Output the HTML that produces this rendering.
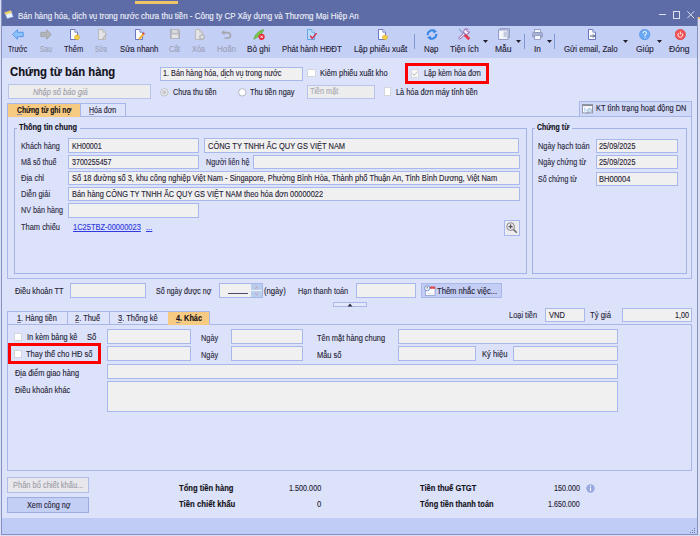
<!DOCTYPE html><html><head><meta charset="utf-8"><style>
*{box-sizing:border-box;margin:0;padding:0}
html,body{width:700px;height:536px;overflow:hidden}
body{position:relative;background:#dcdff2;font-family:"Liberation Sans",sans-serif;font-size:8px;color:#262234}
.a{position:absolute}
u{text-decoration-color:#8a8a9a}
.t{position:absolute;white-space:nowrap;line-height:1.117;transform-origin:0 0;-webkit-text-stroke:0.12px currentColor}
</style></head><body>
<div class="a" style="left:1px;top:0px;width:697.00px;height:535.00px;background:#dbe2fa;border-left:1px solid #8391c4;border-right:1px solid #8391c4;border-bottom:1px solid #8391c4;"></div>
<div class="a" style="left:2px;top:0px;width:695.00px;height:26.00px;background:#5d6ca6;"></div>
<div class="a" style="left:135px;top:1px;width:43.00px;height:3.00px;background:#f0c46a;"></div>
<div class="a" style="left:697px;top:0px;width:3.00px;height:16.50px;background:#5d6ca6;"></div>
<div class="a" style="left:698.3px;top:16.5px;width:1.70px;height:2.00px;background:#f0c060;"></div>
<svg class="a" style="left:4px;top:10px" width="10" height="9" viewBox="0 0 10 9"><path d="M0.5 2.5L7 0.5L9.5 7L3 8.8Z" fill="#e8f4ff" stroke="#6a7ae0" stroke-width="0.7"/><path d="M0.5 2.5L7 0.5L7.8 2.8L1.3 4.8Z" fill="#f0d060"/></svg>
<span class="t" style="top:11.11px;font-size:9px;color:#eef0fa;left:17.60px;transform:scaleX(0.8854);">Bán hàng hóa, dịch vụ trong nước chưa thu tiền - Công ty CP Xây dựng và Thương Mại Hiệp An</span>
<div class="a" style="left:659.3px;top:14px;width:7.00px;height:1.00px;background:#dde1ee;"></div>
<div class="a" style="left:672.6px;top:11.4px;width:7.20px;height:7.20px;border:1px solid #dde1ee;"></div>
<svg class="a" style="left:687.2px;top:11.4px" width="7.5" height="7.5" viewBox="0 0 7.5 7.5"><path d="M0.3 0.3L7.2 7.2M7.2 0.3L0.3 7.2" stroke="#dde1ee" stroke-width="1"/></svg>
<div class="a" style="left:2px;top:26px;width:695.00px;height:31.50px;background:#c4cff5;"></div>
<span class="t" style="top:43.74px;font-size:9.4px;color:#262234;left:7.90px;transform:scaleX(0.7522);">Trước</span>
<span class="t" style="top:43.74px;font-size:9.4px;color:#9ca2b6;left:39.70px;transform:scaleX(0.7287);">Sau</span>
<span class="t" style="top:43.74px;font-size:9.4px;color:#262234;left:64.30px;transform:scaleX(0.7990);">Thêm</span>
<span class="t" style="top:43.74px;font-size:9.4px;color:#9ca2b6;left:94.70px;transform:scaleX(0.6692);">Sửa</span>
<span class="t" style="top:43.74px;font-size:9.4px;color:#262234;left:119.70px;transform:scaleX(0.8268);">Sửa nhanh</span>
<span class="t" style="top:43.74px;font-size:9.4px;color:#9ca2b6;left:169.00px;transform:scaleX(0.7608);">Cất</span>
<span class="t" style="top:43.74px;font-size:9.4px;color:#9ca2b6;left:191.70px;transform:scaleX(0.7843);">Xóa</span>
<span class="t" style="top:43.74px;font-size:9.4px;color:#9ca2b6;left:216.90px;transform:scaleX(0.8469);">Hoãn</span>
<span class="t" style="top:43.74px;font-size:9.4px;color:#262234;left:247.00px;transform:scaleX(0.8679);">Bỏ ghi</span>
<span class="t" style="top:43.74px;font-size:9.4px;color:#262234;left:281.80px;transform:scaleX(0.8373);">Phát hành HĐĐT</span>
<span class="t" style="top:43.74px;font-size:9.4px;color:#262234;left:354.20px;transform:scaleX(0.8658);">Lập phiếu xuất</span>
<span class="t" style="top:43.74px;font-size:9.4px;color:#262234;left:424.00px;transform:scaleX(0.8420);">Nạp</span>
<span class="t" style="top:43.74px;font-size:9.4px;color:#262234;left:449.60px;transform:scaleX(0.8693);">Tiện ích</span>
<span class="t" style="top:43.74px;font-size:9.4px;color:#262234;left:494.60px;transform:scaleX(0.9099);">Mẫu</span>
<span class="t" style="top:43.74px;font-size:9.4px;color:#262234;left:533.60px;transform:scaleX(0.8810);">In</span>
<span class="t" style="top:43.74px;font-size:9.4px;color:#262234;left:564.00px;transform:scaleX(0.8374);">Gửi email, Zalo</span>
<span class="t" style="top:43.74px;font-size:9.4px;color:#262234;left:635.70px;transform:scaleX(0.8985);">Giúp</span>
<span class="t" style="top:43.74px;font-size:9.4px;color:#262234;left:668.90px;transform:scaleX(0.9190);">Đóng</span>
<div class="a" style="left:414.3px;top:33.5px;width:1.00px;height:15.00px;background:#7c9ad8;"></div>
<div class="a" style="left:523.5px;top:33.5px;width:1.00px;height:15.00px;background:#7c9ad8;"></div>
<div class="a" style="left:553.8px;top:33.5px;width:1.00px;height:15.00px;background:#7c9ad8;"></div>
<svg class="a" style="left:482.5px;top:40px" width="5" height="3" viewBox="0 0 5 3"><path d="M0 0H5L2.5 3Z" fill="#202030"/></svg>
<svg class="a" style="left:515.7px;top:40px" width="5" height="3" viewBox="0 0 5 3"><path d="M0 0H5L2.5 3Z" fill="#202030"/></svg>
<svg class="a" style="left:546.8px;top:40px" width="5" height="3" viewBox="0 0 5 3"><path d="M0 0H5L2.5 3Z" fill="#202030"/></svg>
<svg class="a" style="left:622.5px;top:40px" width="5" height="3" viewBox="0 0 5 3"><path d="M0 0H5L2.5 3Z" fill="#202030"/></svg>
<svg class="a" style="left:657.2px;top:40px" width="5" height="3" viewBox="0 0 5 3"><path d="M0 0H5L2.5 3Z" fill="#202030"/></svg>
<svg class="a" style="left:12px;top:28.5px" width="12" height="11" viewBox="0 0 12 11"><path d="M0.6 5.5L5.4 0.7V3.3H11.2V7.7H5.4V10.3Z" fill="#8ec2fa" stroke="#4f92ea" stroke-width="0.9" stroke-linejoin="round"/></svg><svg class="a" style="left:39.5px;top:28.5px" width="12" height="11" viewBox="0 0 12 11"><path d="M11.4 5.5L6.6 0.7V3.3H0.8V7.7H6.6V10.3Z" fill="#b2b4b8" stroke="#a2a4aa" stroke-width="0.9" stroke-linejoin="round"/></svg><svg class="a" style="left:69px;top:28.5px" width="11" height="11" viewBox="0 0 11 11"><path d="M1.5 0.5H5.8L8.5 3.2V10.5H1.5Z" fill="#fff" stroke="#5a6ab8" stroke-width="0.9"/><path d="M5.8 0.5V3.2H8.5" fill="#dfe4f4" stroke="#5a6ab8" stroke-width="0.7"/><circle cx="8" cy="8.3" r="2.4" fill="#f6d040" stroke="#d8a828" stroke-width="0.6"/></svg><svg class="a" style="left:97px;top:28.5px" width="11" height="11" viewBox="0 0 11 11"><path d="M1.5 0.5H5.8L8.5 3.2V10.5H1.5Z" fill="#e4e4e6" stroke="#b4b4b8" stroke-width="0.9"/><path d="M5.8 0.5V3.2H8.5" fill="#d0d0d4" stroke="#b4b4b8" stroke-width="0.7"/><path d="M5.5 10L9.8 5" stroke="#bdbdc0" stroke-width="1.8"/></svg><svg class="a" style="left:133.5px;top:28.5px" width="11" height="11" viewBox="0 0 11 11"><path d="M1.5 0.5H5.8L8.5 3.2V10.5H1.5Z" fill="#fff" stroke="#5a6ab8" stroke-width="0.9"/><path d="M5.8 0.5V3.2H8.5" fill="#dfe4f4" stroke="#5a6ab8" stroke-width="0.7"/><path d="M5 10.3L9.6 4.8" stroke="#f0b030" stroke-width="2"/><path d="M9 5.2L10.2 3.8" stroke="#e04040" stroke-width="2"/></svg><svg class="a" style="left:170px;top:29px" width="10" height="10" viewBox="0 0 10 10"><path d="M0.5 0.5H8.5L9.5 1.5V9.5H0.5Z" fill="#bdbdc2" stroke="#a6a6ac" stroke-width="0.8"/><rect x="2.3" y="0.8" width="5" height="3" fill="#dcdce0"/><rect x="1.8" y="5.6" width="6.4" height="3.6" fill="#e4e4e8"/></svg><svg class="a" style="left:193.5px;top:28.5px" width="11" height="11" viewBox="0 0 11 11"><path d="M1.5 0.5H5.8L8.5 3.2V10.5H1.5Z" fill="#e4e4e6" stroke="#b4b4b8" stroke-width="0.9"/><path d="M5.8 0.5V3.2H8.5" fill="#d0d0d4" stroke="#b4b4b8" stroke-width="0.7"/><circle cx="8" cy="8" r="2.6" fill="#c8c8cc" stroke="#a8a8ae" stroke-width="0.6"/><path d="M7 7L9 9M9 7L7 9" stroke="#f0f0f0" stroke-width="0.7"/></svg><svg class="a" style="left:221px;top:30px" width="11" height="9" viewBox="0 0 11 9"><path d="M2.8 2.6H6.8A2.7 2.7 0 0 1 6.8 8H3.5" fill="none" stroke="#a4a6ae" stroke-width="1.7"/><path d="M0.2 2.6L3.4 0V5.2Z" fill="#a4a6ae"/></svg><svg class="a" style="left:253px;top:28.5px" width="12" height="11" viewBox="0 0 12 11"><path d="M0.8 10.2C2 6 5 2 10.6 0.6C10 4 6 8 0.8 10.2Z" fill="#74c84a" stroke="#4e9a30" stroke-width="0.6"/><circle cx="8.6" cy="7.8" r="3.1" fill="#ea2a3a"/><path d="M7.4 6.6L9.8 9M9.8 6.6L7.4 9" stroke="#fff" stroke-width="0.9"/></svg><svg class="a" style="left:306px;top:28.5px" width="11" height="11" viewBox="0 0 11 11"><path d="M1.5 0.5H5.8L8.5 3.2V10.5H1.5Z" fill="#b8dcfa" stroke="#5a9ae0" stroke-width="0.9"/><path d="M5.8 0.5V3.2H8.5" fill="#e0f0ff" stroke="#5a9ae0" stroke-width="0.7"/><path d="M4.2 6.8L6.2 9.4L10.6 4.2" fill="none" stroke="#e02a48" stroke-width="1.4"/></svg><svg class="a" style="left:376.5px;top:28.5px" width="11" height="11" viewBox="0 0 11 11"><path d="M1.5 0.5H5.8L8.5 3.2V10.5H1.5Z" fill="#fff" stroke="#5a6ab8" stroke-width="0.9"/><path d="M5.8 0.5V3.2H8.5" fill="#dfe4f4" stroke="#5a6ab8" stroke-width="0.7"/><circle cx="8" cy="8.3" r="2.4" fill="#f6d040" stroke="#d8a828" stroke-width="0.6"/></svg><svg class="a" style="left:425.5px;top:29px" width="12" height="11" viewBox="0 0 12 11"><path d="M1.8 6.2A4.2 4.2 0 0 1 8.2 2" fill="none" stroke="#3a86e4" stroke-width="2.1"/><path d="M10.2 4.8A4.2 4.2 0 0 1 3.8 9" fill="none" stroke="#3a86e4" stroke-width="2.1"/><path d="M7 0L11 2.2L7.6 4.4Z" fill="#3a86e4"/><path d="M5 11L1 8.8L4.4 6.6Z" fill="#3a86e4"/></svg><svg class="a" style="left:457.5px;top:28px" width="12" height="12" viewBox="0 0 12 12"><path d="M1 1L6 6" stroke="#8aa0cc" stroke-width="1.3"/><path d="M6.8 6.8L10.3 10.3" stroke="#e43c4c" stroke-width="3" stroke-linecap="round"/><path d="M1.8 10.2L7 5" stroke="#9060b0" stroke-width="2.6" stroke-linecap="round"/><path d="M1.8 10.2L7 5" stroke="#f8f4fc" stroke-width="1.1" stroke-linecap="round"/><circle cx="8.4" cy="3.6" r="2.7" fill="#f8f4fc" stroke="#9060b0" stroke-width="1"/><path d="M8.6 3.4L11.6 0.4L12 4Z" fill="#c4cff5"/><path d="M7.6 0.2L8.8 3.2L12 4.2" fill="none" stroke="#9060b0" stroke-width="0.7"/></svg><svg class="a" style="left:497.5px;top:28px" width="12" height="12" viewBox="0 0 12 12"><rect x="2" y="0.6" width="9.4" height="8.8" fill="#c8d0ec" stroke="#8a94c0" stroke-width="0.8"/><rect x="0.6" y="2" width="9.4" height="9.4" fill="#f4f6fc" stroke="#8a94c0" stroke-width="0.9"/><rect x="5.6" y="3.6" width="3.2" height="5.6" fill="#c4c8dc"/></svg><svg class="a" style="left:532px;top:28.5px" width="11" height="11" viewBox="0 0 11 11"><rect x="2.5" y="0.5" width="6" height="3" fill="#f4f6fc" stroke="#8a94c0" stroke-width="0.8"/><rect x="0.5" y="3.5" width="10" height="4.8" rx="1.2" fill="#aab2d0" stroke="#8a94c0" stroke-width="0.8"/><rect x="2.5" y="6.5" width="6" height="4" fill="#f4f6fc" stroke="#8a94c0" stroke-width="0.8"/></svg><svg class="a" style="left:586.5px;top:29px" width="11" height="11" viewBox="0 0 11 11"><path d="M1.5 0.5H5.8L8.5 3.2V10.5H1.5Z" fill="#fff" stroke="#5a6ab8" stroke-width="0.9"/><path d="M5.8 0.5V3.2H8.5" fill="#dfe4f4" stroke="#5a6ab8" stroke-width="0.7"/><path d="M3 7H7.6M6 5.4L7.6 7L6 8.6" fill="none" stroke="#3a4460" stroke-width="0.9"/></svg><svg class="a" style="left:638.5px;top:29px" width="12" height="11" viewBox="0 0 12 11"><circle cx="5.7" cy="5.5" r="5.2" fill="#6aaaf4" stroke="#4a8ae0" stroke-width="0.6"/><path d="M4 4.2A1.7 1.7 0 1 1 6 5.8V7" fill="none" stroke="#fff" stroke-width="1"/><circle cx="6" cy="8.6" r="0.6" fill="#fff"/></svg><svg class="a" style="left:674.5px;top:29px" width="11" height="11" viewBox="0 0 11 11"><circle cx="5.3" cy="5.5" r="5.2" fill="#f05454" stroke="#d83a3e" stroke-width="0.6"/><path d="M3.6 4.2A2.4 2.4 0 1 0 7 4.2" fill="none" stroke="#fff" stroke-width="0.9"/><path d="M5.3 2.6V5.6" stroke="#fff" stroke-width="0.9"/></svg>
<span class="t" style="top:66.29px;font-size:12px;color:#121018;font-weight:bold;-webkit-text-stroke:0.15px currentColor;left:9.80px;transform:scaleX(0.9391);">Chứng từ bán hàng</span>
<div class="a" style="left:160px;top:67px;width:142.50px;height:13.60px;background:#f0f0f0;border:1px solid #a8b8ea;"></div>
<span class="t" style="top:68.96px;font-size:8.5px;color:#262234;left:162.90px;transform:scaleX(0.8560);">1. Bán hàng hóa, dịch vụ trong nước</span>
<div class="a" style="left:307.4px;top:69.4px;width:8.30px;height:8.00px;background:#fff;border:1px solid #d4d6dc;"></div>
<span class="t" style="top:68.96px;font-size:8.5px;color:#262234;left:320.00px;transform:scaleX(0.8785);">Kiêm phiếu xuất kho</span>
<div class="a" style="left:405px;top:63px;width:84.00px;height:21.00px;border:3px solid #fe0000;"></div>
<div class="a" style="left:411px;top:69px;width:8.00px;height:8.50px;background:#f8f8f8;border:1px solid #d8d8dc;"></div>
<svg class="a" style="left:411px;top:69px" width="8" height="8.5" viewBox="0 0 8 8.5"><path d="M1.4 4.4L3.2 6.2L6.8 2.4" fill="none" stroke="#b8b8bc" stroke-width="1"/></svg>
<span class="t" style="top:68.96px;font-size:8.5px;color:#262234;left:423.60px;transform:scaleX(0.8547);">Lập kèm hóa đơn</span>
<div class="a" style="left:7.5px;top:84.3px;width:143.20px;height:14.80px;background:#ededed;border:1px solid #b8c4ec;"></div>
<span class="t" style="top:87.66px;font-size:8.5px;color:#9c9ca8;font-style:italic;left:33.00px;transform:scaleX(0.8845);">Nhập số báo giá</span>
<svg class="a" style="left:160px;top:88px" width="9" height="9" viewBox="0 0 9 9"><circle cx="4.3" cy="4.3" r="3.7" fill="#f2f2f2" stroke="#b0b2bc" stroke-width="0.8"/><circle cx="4.3" cy="4.3" r="2.1" fill="#c4c6cc"/></svg>
<span class="t" style="top:87.76px;font-size:8.5px;color:#262234;left:172.60px;transform:scaleX(0.8456);">Chưa thu tiền</span>
<svg class="a" style="left:238px;top:88px" width="9" height="9" viewBox="0 0 9 9"><circle cx="4.3" cy="4.3" r="3.7" fill="#fff" stroke="#a6aab6" stroke-width="0.8"/></svg>
<span class="t" style="top:87.76px;font-size:8.5px;color:#262234;left:250.00px;transform:scaleX(0.8631);">Thu tiền ngay</span>
<div class="a" style="left:307.1px;top:85.1px;width:67.50px;height:14.00px;background:#ededed;border:1px solid #b8c4ec;"></div>
<span class="t" style="top:87.26px;font-size:8.5px;color:#a8a8b2;left:309.70px;transform:scaleX(0.8656);">Tiền mặt</span>
<div class="a" style="left:383.6px;top:87.4px;width:7.80px;height:8.20px;background:#fff;border:1px solid #d4d6dc;"></div>
<span class="t" style="top:87.76px;font-size:8.5px;color:#262234;left:396.00px;transform:scaleX(0.8650);">Là hóa đơn máy tính tiền</span>
<div class="a" style="left:7.1px;top:116.4px;width:684.90px;height:162.60px;border:1px solid #a9b7e8;"></div>
<div class="a" style="left:14px;top:128px;width:512.50px;height:145.50px;border:1px solid #a2b2e6;"></div>
<div class="a" style="left:17px;top:122px;width:63.00px;height:11.00px;background:#dbe2fa;"></div>
<span class="t" style="top:122.96px;font-size:8.5px;color:#121018;font-weight:bold;left:19.30px;transform:scaleX(0.8709);">Thông tin chung</span>
<div class="a" style="left:532px;top:128px;width:154.50px;height:145.50px;border:1px solid #a2b2e6;"></div>
<div class="a" style="left:535px;top:122px;width:37.00px;height:11.00px;background:#dbe2fa;"></div>
<span class="t" style="top:122.96px;font-size:8.5px;color:#121018;font-weight:bold;left:536.70px;transform:scaleX(0.8212);">Chứng từ</span>
<div class="a" style="left:7.1px;top:103px;width:72.90px;height:14.20px;background:#f6ca80;border:1px solid #a9b7e8;border-bottom:none;border-right:none;"></div>
<div class="a" style="left:79.6px;top:103px;width:46.40px;height:14.40px;background:#dde3fa;border:1px solid #a9b7e8;"></div>
<span class="t" style="top:105.56px;font-size:8.5px;color:#121018;font-weight:bold;left:17.10px;transform:scaleX(0.7985);"><u>C</u>hứng từ ghi nợ</span>
<span class="t" style="top:105.56px;font-size:8.5px;color:#262234;left:88.60px;transform:scaleX(0.8269);"><u>H</u>óa đơn</span>
<div class="a" style="left:579px;top:101px;width:113.00px;height:16.40px;background:#d0d8f7;border:1px solid #a9b7e8;"></div>
<svg class="a" style="left:582px;top:104px" width="11" height="10" viewBox="0 0 11 10"><rect x="0.5" y="0.5" width="10" height="8.4" fill="#fbfcff" stroke="#8a90a0" stroke-width="0.9"/><rect x="0.5" y="0.5" width="10" height="1.6" fill="#8a90a0"/><path d="M2.5 3.5V7.5M4 4.5V7.5" stroke="#b8d4f0" stroke-width="0.9"/><circle cx="7.6" cy="6.6" r="2" fill="#cfe6fa" stroke="#8aa0b8" stroke-width="0.7"/><path d="M6 8.2L4.8 9.6" stroke="#707890" stroke-width="0.9"/></svg>
<span class="t" style="top:104.46px;font-size:8.5px;color:#262234;left:596.00px;transform:scaleX(0.8708);">KT tình trạng hoạt động DN</span>
<span class="t" style="top:142.16px;font-size:8.5px;color:#2e2a40;left:20.80px;transform:scaleX(0.8566);">Khách hàng</span>
<span class="t" style="top:158.06px;font-size:8.5px;color:#2e2a40;left:20.80px;transform:scaleX(0.8458);">Mã số thuế</span>
<span class="t" style="top:174.26px;font-size:8.5px;color:#2e2a40;left:20.80px;transform:scaleX(0.8853);">Địa chỉ</span>
<span class="t" style="top:190.06px;font-size:8.5px;color:#2e2a40;left:20.80px;transform:scaleX(0.8799);">Diễn giải</span>
<span class="t" style="top:205.96px;font-size:8.5px;color:#2e2a40;left:20.80px;transform:scaleX(0.8478);">NV bán hàng</span>
<span class="t" style="top:222.66px;font-size:8.5px;color:#2e2a40;left:20.80px;transform:scaleX(0.8773);">Tham chiếu</span>
<div class="a" style="left:68px;top:138px;width:131.00px;height:14.60px;background:#f0f0f0;border:1px solid #a8b8ea;"></div>
<span class="t" style="top:141.56px;font-size:8.5px;color:#262234;left:72.40px;transform:scaleX(0.8399);">KH00001</span>
<div class="a" style="left:204.3px;top:138px;width:315.20px;height:14.60px;background:#f0f0f0;border:1px solid #a8b8ea;"></div>
<span class="t" style="top:141.56px;font-size:8.5px;color:#262234;left:207.90px;transform:scaleX(0.8787);">CÔNG TY TNHH ẮC QUY GS VIỆT NAM</span>
<div class="a" style="left:68px;top:154.6px;width:131.00px;height:14.00px;background:#f0f0f0;border:1px solid #a8b8ea;"></div>
<span class="t" style="top:157.86px;font-size:8.5px;color:#262234;left:72.40px;transform:scaleX(0.8350);">3700255457</span>
<span class="t" style="top:158.06px;font-size:8.5px;color:#2e2a40;left:205.70px;transform:scaleX(0.8433);">Người liên hệ</span>
<div class="a" style="left:253px;top:154.6px;width:266.50px;height:14.00px;background:#f0f0f0;border:1px solid #a8b8ea;"></div>
<div class="a" style="left:68px;top:171.1px;width:451.50px;height:13.70px;background:#f0f0f0;border:1px solid #a8b8ea;"></div>
<span class="t" style="top:174.16px;font-size:8.5px;color:#262234;left:72.40px;transform:scaleX(0.8745);">Số 18 đường số 3, khu công nghiệp Việt Nam - Singapore, Phường Bình Hòa, Thành phố Thuận An, Tỉnh Bình Dương, Việt Nam</span>
<div class="a" style="left:68px;top:186.8px;width:451.50px;height:14.40px;background:#f0f0f0;border:1px solid #a8b8ea;"></div>
<span class="t" style="top:189.96px;font-size:8.5px;color:#262234;left:72.40px;transform:scaleX(0.8725);">Bán hàng CÔNG TY TNHH ẮC QUY GS VIỆT NAM theo hóa đơn 00000022</span>
<div class="a" style="left:68px;top:203.3px;width:131.00px;height:14.70px;background:#f0f0f0;border:1px solid #a8b8ea;"></div>
<span class="t" style="top:223.06px;font-size:8.5px;color:#3038e0;left:73.30px;transform:scaleX(0.8810);"><u style="text-decoration-color:currentColor">1C25TBZ-00000023</u></span>
<span class="t" style="top:223.06px;font-size:8.5px;color:#3038e0;left:145.70px;transform:scaleX(0.8924);"><u style="text-decoration-color:currentColor">...</u></span>
<div class="a" style="left:504px;top:220px;width:16.00px;height:16.00px;background:#ececee;border:1px solid #a8b8ee;"></div>
<svg class="a" style="left:505px;top:221px" width="14" height="14" viewBox="0 0 14 14"><circle cx="5.6" cy="5.6" r="3.9" fill="#e4e4e6" stroke="#8a8a90" stroke-width="1"/><path d="M8.4 8.4L11.8 11.8" stroke="#6e6e74" stroke-width="1.5"/><path d="M3.6 5.6H7.6M5.6 3.6V7.6" stroke="#505058" stroke-width="1.2"/></svg>
<span class="t" style="top:142.36px;font-size:8.5px;color:#2e2a40;left:538.00px;transform:scaleX(0.8677);">Ngày hạch toán</span>
<div class="a" style="left:596.4px;top:139.4px;width:81.20px;height:13.60px;background:#f0f0f0;border:1px solid #a8b8ea;"></div>
<span class="t" style="top:142.06px;font-size:8.5px;color:#262234;left:599.00px;transform:scaleX(0.8572);">25/09/2025</span>
<span class="t" style="top:158.36px;font-size:8.5px;color:#2e2a40;left:538.00px;transform:scaleX(0.8466);">Ngày chứng từ</span>
<div class="a" style="left:596.4px;top:155.4px;width:81.20px;height:13.60px;background:#f0f0f0;border:1px solid #a8b8ea;"></div>
<span class="t" style="top:158.06px;font-size:8.5px;color:#262234;left:599.00px;transform:scaleX(0.8572);">25/09/2025</span>
<span class="t" style="top:175.06px;font-size:8.5px;color:#2e2a40;left:538.00px;transform:scaleX(0.8214);">Số chứng từ</span>
<div class="a" style="left:596.4px;top:172px;width:81.20px;height:13.70px;background:#f0f0f0;border:1px solid #a8b8ea;"></div>
<span class="t" style="top:174.66px;font-size:8.5px;color:#262234;left:599.00px;transform:scaleX(0.8847);">BH00004</span>
<span class="t" style="top:286.66px;font-size:8.5px;color:#262234;left:14.50px;transform:scaleX(0.8730);">Điều khoản TT</span>
<div class="a" style="left:70px;top:283px;width:76.00px;height:14.50px;background:#f0f0f0;border:1px solid #a8b8ea;"></div>
<span class="t" style="top:286.66px;font-size:8.5px;color:#262234;left:156.00px;transform:scaleX(0.8343);">Số ngày được nợ</span>
<div class="a" style="left:219px;top:283px;width:44.00px;height:15.00px;background:#f0f0f0;border:1px solid #a8b8ea;"></div>
<div class="a" style="left:250.7px;top:284px;width:11.30px;height:6.00px;background:#b9cdec;"></div>
<div class="a" style="left:250.7px;top:290.8px;width:11.30px;height:6.20px;background:#b9cdec;"></div>
<svg class="a" style="left:254px;top:286px" width="5" height="10" viewBox="0 0 5 10"><path d="M1.2 2.4L2.5 1.2L3.8 2.4" fill="none" stroke="#d07080" stroke-width="0.7"/><path d="M1.2 7.6L2.5 8.8L3.8 7.6" fill="none" stroke="#d07080" stroke-width="0.7"/></svg>
<div class="a" style="left:228px;top:293.2px;width:20.40px;height:1.20px;background:#504868;"></div>
<span class="t" style="top:286.66px;font-size:8.5px;color:#262234;left:263.80px;transform:scaleX(0.9026);">(ngày)</span>
<span class="t" style="top:286.66px;font-size:8.5px;color:#2e2a40;left:297.80px;transform:scaleX(0.8630);">Hạn thanh toán</span>
<div class="a" style="left:356px;top:283px;width:60.00px;height:15.00px;background:#f0f0f0;border:1px solid #a8b8ea;"></div>
<div class="a" style="left:421px;top:282.5px;width:80.50px;height:15.50px;background:#c4cef4;border:1px solid #a8b8ea;"></div>
<svg class="a" style="left:424px;top:285px" width="12" height="12" viewBox="0 0 12 12"><rect x="1.5" y="2" width="9.5" height="8.6" fill="#fdfdff" stroke="#8090c8" stroke-width="0.7"/><rect x="5.6" y="1.6" width="5.6" height="2.2" fill="#e84a4a"/><path d="M3.5 8.5H9.5" stroke="#d8dcec" stroke-width="0.8"/><circle cx="3.2" cy="3.2" r="2.6" fill="#f4f6fc" stroke="#6a8ad0" stroke-width="0.9"/><path d="M3.2 1.8V3.6" stroke="#404860" stroke-width="0.8"/></svg>
<span class="t" style="top:286.96px;font-size:8.5px;color:#262234;left:437.20px;transform:scaleX(0.8948);">Thêm nhắc việc...</span>
<div class="a" style="left:333px;top:301.7px;width:34.00px;height:5.30px;background:#e4e8f8;border:1px solid #a8b8ea;"></div>
<svg class="a" style="left:347px;top:302.5px" width="6" height="4" viewBox="0 0 6 4"><path d="M0.5 3.5H5.5L3 0.5Z" fill="#303040"/></svg>
<div class="a" style="left:7.1px;top:324px;width:684.90px;height:147.00px;border:1px solid #a9b7e8;"></div>
<div class="a" style="left:7.1px;top:311px;width:60.50px;height:14.00px;background:#dde3fa;border:1px solid #a9b7e8;"></div>
<span class="t" style="top:313.66px;font-size:8.5px;color:#262234;left:17.00px;transform:scaleX(0.8675);"><u>1</u>. Hàng tiền</span>
<div class="a" style="left:66.6px;top:311px;width:43.40px;height:14.00px;background:#dde3fa;border:1px solid #a9b7e8;"></div>
<span class="t" style="top:313.66px;font-size:8.5px;color:#262234;left:74.50px;transform:scaleX(0.8764);"><u>2</u>. Thuế</span>
<div class="a" style="left:109px;top:311px;width:59.50px;height:14.00px;background:#dde3fa;border:1px solid #a9b7e8;"></div>
<span class="t" style="top:313.66px;font-size:8.5px;color:#262234;left:118.00px;transform:scaleX(0.8857);"><u>3</u>. Thống kê</span>
<div class="a" style="left:167.5px;top:311px;width:42.50px;height:14.00px;background:#f6ca80;border:1px solid #a9b7e8;border-bottom:none;border-left:none;"></div>
<span class="t" style="top:313.66px;font-size:8.5px;color:#121018;font-weight:bold;left:175.80px;transform:scaleX(0.8588);"><u>4</u>. Khác</span>
<span class="t" style="top:311.16px;font-size:8.5px;color:#2e2a40;left:508.90px;transform:scaleX(0.8732);">Loại tiền</span>
<div class="a" style="left:545.3px;top:308.2px;width:40.10px;height:13.40px;background:#f0f0f0;border:1px solid #a8b8ea;"></div>
<span class="t" style="top:310.86px;font-size:8.5px;color:#262234;left:549.40px;transform:scaleX(0.8872);">VND</span>
<span class="t" style="top:311.16px;font-size:8.5px;color:#262234;left:590.20px;transform:scaleX(0.9095);">Tỷ giá</span>
<div class="a" style="left:622px;top:308.3px;width:69.50px;height:13.40px;background:#f0f0f0;border:1px solid #a8b8ea;"></div>
<span class="t" style="top:310.86px;font-size:8.5px;color:#262234;left:674.90px;transform:scaleX(0.8444);">1,00</span>
<div class="a" style="left:13.7px;top:332.8px;width:8.50px;height:7.80px;background:#fff;border:1px solid #d4d6dc;"></div>
<span class="t" style="top:332.96px;font-size:8.5px;color:#262234;left:26.70px;transform:scaleX(0.8683);">In kèm bảng kê</span>
<span class="t" style="top:333.46px;font-size:8.5px;color:#262234;left:86.50px;transform:scaleX(0.8904);">Số</span>
<div class="a" style="left:106.5px;top:329px;width:84.00px;height:15.00px;background:#f0f0f0;border:1px solid #a8b8ea;"></div>
<span class="t" style="top:334.16px;font-size:8.5px;color:#2e2a40;left:201.40px;transform:scaleX(0.8644);">Ngày</span>
<div class="a" style="left:231px;top:329px;width:72.00px;height:15.00px;background:#f0f0f0;border:1px solid #a8b8ea;"></div>
<span class="t" style="top:333.66px;font-size:8.5px;color:#262234;left:317.10px;transform:scaleX(0.8729);">Tên mặt hàng chung</span>
<div class="a" style="left:397.5px;top:329px;width:220.50px;height:15.00px;background:#f0f0f0;border:1px solid #a8b8ea;"></div>
<div class="a" style="left:8px;top:343px;width:93.00px;height:21.00px;border:3px solid #fe0000;"></div>
<div class="a" style="left:13.5px;top:350px;width:8.00px;height:8.00px;background:#fff;border:1px solid #d4d6dc;"></div>
<span class="t" style="top:350.16px;font-size:8.5px;color:#262234;left:26.10px;transform:scaleX(0.8834);">Thay thế cho HĐ số</span>
<div class="a" style="left:106.5px;top:346px;width:84.00px;height:15.00px;background:#f0f0f0;border:1px solid #a8b8ea;"></div>
<span class="t" style="top:350.66px;font-size:8.5px;color:#2e2a40;left:201.40px;transform:scaleX(0.8644);">Ngày</span>
<div class="a" style="left:231px;top:346px;width:72.00px;height:15.00px;background:#f0f0f0;border:1px solid #a8b8ea;"></div>
<span class="t" style="top:350.66px;font-size:8.5px;color:#262234;left:317.10px;transform:scaleX(0.8775);">Mẫu số</span>
<div class="a" style="left:397.5px;top:346px;width:78.50px;height:15.00px;background:#f0f0f0;border:1px solid #a8b8ea;"></div>
<span class="t" style="top:350.16px;font-size:8.5px;color:#262234;left:482.40px;transform:scaleX(0.8978);">Ký hiệu</span>
<div class="a" style="left:513px;top:346px;width:105.00px;height:15.00px;background:#f0f0f0;border:1px solid #a8b8ea;"></div>
<span class="t" style="top:368.66px;font-size:8.5px;color:#262234;left:15.00px;transform:scaleX(0.8747);">Địa điểm giao hàng</span>
<div class="a" style="left:106.5px;top:364px;width:511.50px;height:15.00px;background:#f0f0f0;border:1px solid #a8b8ea;"></div>
<span class="t" style="top:385.66px;font-size:8.5px;color:#262234;left:15.00px;transform:scaleX(0.8725);">Điều khoản khác</span>
<div class="a" style="left:106.5px;top:381px;width:511.50px;height:31.00px;background:#f0f0f0;border:1px solid #a8b8ea;"></div>
<div class="a" style="left:7px;top:477px;width:82.00px;height:16.00px;background:#e8e8ec;border:1px solid #b0bde6;"></div>
<span class="t" style="top:481.16px;font-size:8.5px;color:#9c9ca8;left:13.20px;transform:scaleX(0.8805);">Phân bổ chiết khấu...</span>
<div class="a" style="left:7px;top:497px;width:82.00px;height:16.00px;background:#c4cff6;border:1px solid #9cace2;"></div>
<span class="t" style="top:501.26px;font-size:8.5px;color:#262234;left:26.60px;transform:scaleX(0.8548);">Xem công nợ</span>
<span class="t" style="top:484.16px;font-size:8.5px;color:#121018;font-weight:bold;left:178.50px;transform:scaleX(0.8943);">Tổng tiền hàng</span>
<span class="t" style="top:483.66px;font-size:8.5px;color:#262234;left:289.10px;transform:scaleX(0.8507);">1.500.000</span>
<span class="t" style="top:499.66px;font-size:8.5px;color:#121018;font-weight:bold;left:178.50px;transform:scaleX(0.9118);">Tiền chiết khấu</span>
<span class="t" style="top:499.66px;font-size:8.5px;color:#262234;left:317.00px;transform:scaleX(0.9000);">0</span>
<span class="t" style="top:483.86px;font-size:8.5px;color:#121018;font-weight:bold;left:420.00px;transform:scaleX(0.8851);">Tiền thuế GTGT</span>
<span class="t" style="top:483.66px;font-size:8.5px;color:#262234;left:553.70px;transform:scaleX(0.8484);">150.000</span>
<svg class="a" style="left:585.5px;top:483.5px" width="9" height="9" viewBox="0 0 9 9"><circle cx="4.5" cy="4.5" r="4.2" fill="#98a8e0"/><path d="M4.5 3.6V7" stroke="#fff" stroke-width="1.1"/><circle cx="4.5" cy="2.2" r="0.7" fill="#fff"/></svg>
<span class="t" style="top:499.66px;font-size:8.5px;color:#121018;font-weight:bold;left:420.00px;transform:scaleX(0.8754);">Tổng tiền thanh toán</span>
<span class="t" style="top:499.66px;font-size:8.5px;color:#262234;left:548.00px;transform:scaleX(0.8402);">1.650.000</span>
<div class="a" style="left:2px;top:518px;width:695.00px;height:16.00px;background:#c1ccf6;"></div>
<div class="a" style="left:694px;top:528px;width:1.00px;height:1.00px;background:#7080a8;"></div>
<div class="a" style="left:692px;top:530px;width:1.00px;height:1.00px;background:#7080a8;"></div>
<div class="a" style="left:694px;top:530px;width:1.00px;height:1.00px;background:#7080a8;"></div>
<div class="a" style="left:690px;top:532px;width:1.00px;height:1.00px;background:#7080a8;"></div>
<div class="a" style="left:692px;top:532px;width:1.00px;height:1.00px;background:#7080a8;"></div>
<div class="a" style="left:694px;top:532px;width:1.00px;height:1.00px;background:#7080a8;"></div>
</body></html>
